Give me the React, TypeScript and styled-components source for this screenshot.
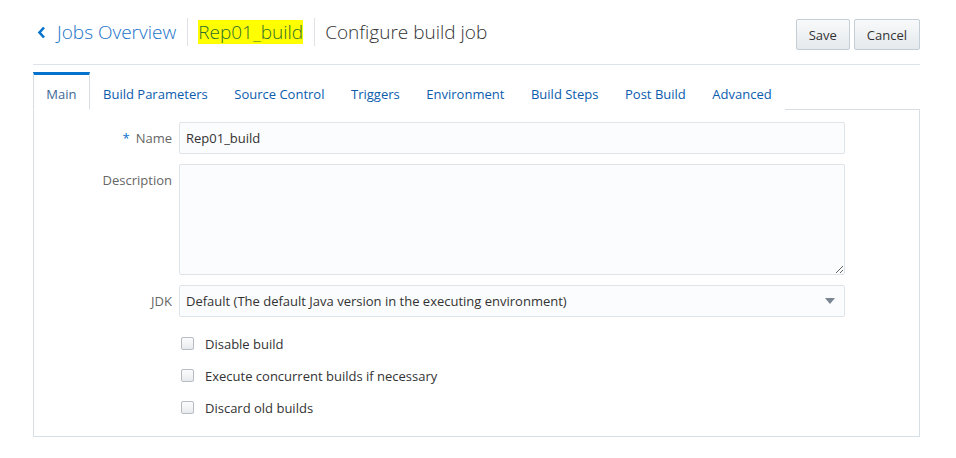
import React, { useState } from "react";
import styled, { createGlobalStyle } from "styled-components";

const GlobalStyle = createGlobalStyle`
  body {
    margin: 0;
    background: #fff;
    font-family: "Open Sans", "Noto Sans", sans-serif;
    color: #333;
  }
`;

const Page = styled.div`
  padding: 0 36px 0 33px;
`;

const HeaderContainer = styled.div`
  display: flex;
  justify-content: space-between;
  align-items: flex-start;
  height: 64px;
  border-bottom: 1px solid #dde3e8;
`;

const Breadcrumbs = styled.div`
  display: flex;
  align-items: center;
  margin-top: 18px;
`;

const BackLink = styled.a`
  display: flex;
  align-items: center;
  color: #1a73c9;
  font-size: 19px;
  font-weight: 300;
  text-decoration: none;
  cursor: pointer;

  svg {
    margin: 0 11px 0 4px;
  }
`;

const Divider = styled.span`
  width: 1px;
  height: 28px;
  background: #dfe3e8;
  margin: 0 10px 0 11px;
`;

const Highlight = styled.span`
  background: #ffff00;
  color: #2f6e2f;
  font-size: 19px;
  font-weight: 300;
  line-height: 24px;
`;

const Title = styled.span`
  color: #333;
  font-size: 19px;
  font-weight: 300;
`;

const Actions = styled.div`
  display: flex;
  gap: 4px;
  margin-top: 19px;
`;

const Button = styled.button`
  height: 31px;
  padding: 0 12px;
  font-family: inherit;
  font-size: 13px;
  color: #333;
  background: linear-gradient(#f8f9fa, #e5e9ec);
  border: 1px solid #c4ced7;
  border-radius: 2px;
  cursor: pointer;

  &:hover {
    background: #e5e9ec;
  }
`;

const TabBar = styled.div`
  display: flex;
  margin-top: 7px;
  border-bottom: 1px solid #d6dfe6;
`;

const Tab = styled.button<{ active: boolean }>`
  height: 38px;
  padding: 3px 12.3px 0;
  margin-bottom: -1px;
  font-family: inherit;
  font-size: 13px;
  color: ${(props) => (props.active ? "#3d6794" : "#0b5cad")};
  background: #fff;
  border: 1px solid ${(props) => (props.active ? "#d6dfe6" : "transparent")};
  border-top: 3px solid ${(props) => (props.active ? "#0572ce" : "transparent")};
  border-bottom-color: ${(props) => (props.active ? "#fff" : "transparent")};
  cursor: pointer;
`;

const Panel = styled.div`
  border: 1px solid #d6dfe6;
  border-top: none;
  padding: 12px 74px 18px 0;
  display: flex;
  flex-direction: column;
  gap: 10px;
`;

const FormRow = styled.div<{ top?: boolean }>`
  display: flex;
  align-items: ${(props) => (props.top ? "flex-start" : "center")};
  gap: 7px;
`;

const Label = styled.label<{ top?: boolean }>`
  width: 138px;
  flex-shrink: 0;
  text-align: right;
  font-size: 13px;
  color: #666;
  padding-top: ${(props) => (props.top ? "7px" : "0")};
`;

const Required = styled.span`
  color: #0572ce;
  margin-right: 6px;
`;

const TextInput = styled.input`
  flex: 1;
  height: 32px;
  box-sizing: border-box;
  padding: 0 6px;
  font-family: inherit;
  font-size: 13px;
  color: #333;
  background: #fbfcfd;
  border: 1px solid #dfe4e9;
  border-radius: 2px;
  outline: none;
`;

const TextArea = styled.textarea`
  flex: 1;
  height: 111px;
  box-sizing: border-box;
  padding: 6px;
  font-family: inherit;
  font-size: 13px;
  background: #fbfcfd;
  border: 1px solid #dfe4e9;
  border-radius: 2px;
  outline: none;
`;

const Select = styled.div`
  flex: 1;
  height: 32px;
  box-sizing: border-box;
  display: flex;
  align-items: center;
  justify-content: space-between;
  padding: 0 9px 0 6px;
  font-size: 13px;
  color: #333;
  background: #fbfcfd;
  border: 1px solid #dfe4e9;
  border-radius: 2px;
  cursor: pointer;
`;

const Caret = styled.span`
  width: 0;
  height: 0;
  border-left: 5px solid transparent;
  border-right: 5px solid transparent;
  border-top: 6px solid #7a8591;
`;

const CheckList = styled.div`
  display: flex;
  flex-direction: column;
  gap: 11px;
  padding: 6px 0 0 146px;
`;

const CheckRow = styled.label`
  display: flex;
  align-items: center;
  height: 21px;
  font-size: 13px;
  color: #333;
  cursor: pointer;
`;

const Box = styled.span`
  width: 11px;
  height: 11px;
  margin: 0 11px 0 1px;
  border: 1px solid #b5bcc4;
  border-radius: 2px;
  background: linear-gradient(#fafbfc, #e8ebee);
`;

const tabs = [
  "Main",
  "Build Parameters",
  "Source Control",
  "Triggers",
  "Environment",
  "Build Steps",
  "Post Build",
  "Advanced",
];

const options = [
  "Disable build",
  "Execute concurrent builds if necessary",
  "Discard old builds",
];

const App: React.FC = () => {
  const [activeTab, setActiveTab] = useState("Main");

  return (
    <Page>
      <GlobalStyle />
      <HeaderContainer>
        <Breadcrumbs>
          <BackLink>
            <svg width="9" height="13" viewBox="0 0 9 13">
              <path d="M7 1.5 L2.5 6.5 L7 11.5" fill="none" stroke="#0572ce" strokeWidth="2.6" />
            </svg>
            Jobs Overview
          </BackLink>
          <Divider />
          <Highlight>Rep01_build</Highlight>
          <Divider />
          <Title>Configure build job</Title>
        </Breadcrumbs>
        <Actions>
          <Button>Save</Button>
          <Button>Cancel</Button>
        </Actions>
      </HeaderContainer>

      <TabBar>
        {tabs.map((t) => (
          <Tab key={t} active={activeTab === t} onClick={() => setActiveTab(t)}>
            {t}
          </Tab>
        ))}
      </TabBar>

      <Panel>
        <FormRow>
          <Label>
            <Required>*</Required>Name
          </Label>
          <TextInput defaultValue="Rep01_build" />
        </FormRow>
        <FormRow top>
          <Label top>Description</Label>
          <TextArea />
        </FormRow>
        <FormRow>
          <Label>JDK</Label>
          <Select>
            Default (The default Java version in the executing environment)
            <Caret />
          </Select>
        </FormRow>
        <CheckList>
          {options.map((o) => (
            <CheckRow key={o}>
              <Box />
              {o}
            </CheckRow>
          ))}
        </CheckList>
      </Panel>
    </Page>
  );
};

export default App;
